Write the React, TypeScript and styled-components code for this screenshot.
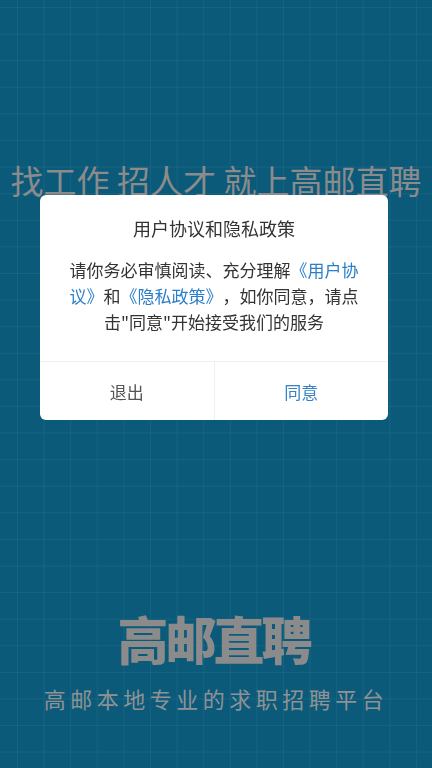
import styled, { createGlobalStyle } from "styled-components";

const GlobalStyle = createGlobalStyle`
  html, body {
    margin: 0;
    padding: 0;
    background: #0b5a7a;
  }
  body {
    font-family: "Noto Sans CJK SC", "Noto Sans", sans-serif;
    text-spacing-trim: space-all;
  }
`;

const Splash = styled.div`
  position: relative;
  width: 432px;
  height: 768px;
  overflow: hidden;
  display: flex;
  flex-direction: column;
  align-items: center;
  background-color: #0b5a7a;
  background-image:
    linear-gradient(to right, rgba(255, 255, 255, 0.05) 1px, transparent 1px),
    linear-gradient(to bottom, rgba(255, 255, 255, 0.05) 1px, transparent 1px);
  background-size: 26.6px 26.6px;
  background-position: 17px 7px;
`;

const Slogan = styled.h2`
  margin: 160px 0 0;
  font-size: 33px;
  line-height: 40px;
  font-weight: 400;
  color: #8b8b8b;
  white-space: nowrap;
`;

const Brand = styled.h1`
  margin: 408px 0 0;
  font-size: 51px;
  line-height: 60px;
  font-weight: 900;
  letter-spacing: -3px;
  padding-right: 5px;
  color: #8b8b8b;
`;

const Tagline = styled.p`
  margin: 15px 0 0;
  font-size: 22px;
  line-height: 30px;
  letter-spacing: 4.5px;
  color: #8e9294;
`;

const Overlay = styled.div`
  position: fixed;
  inset: 0;
  display: flex;
  justify-content: flex-start;
  align-items: flex-start;
  padding: 195px 0 0 40px;
`;

const Dialog = styled.div`
  width: 348px;
  background: #ffffff;
  border-radius: 6px;
  overflow: hidden;
  display: flex;
  flex-direction: column;
`;

const Title = styled.div`
  padding: 20px 0 0;
  text-align: center;
  font-size: 18px;
  line-height: 26px;
  color: #333333;
`;

const Message = styled.div`
  padding: 16px 24px 26px;
  text-align: center;
  font-size: 17px;
  line-height: 26px;
  color: #333333;
`;

const Link = styled.span`
  color: #2b7ecb;
`;

const Actions = styled.div`
  display: flex;
  border-top: 1px solid #f0f0f0;
`;

const ActionButton = styled.button<{ $primary?: boolean }>`
  flex: 1;
  height: 58px;
  border: none;
  background: transparent;
  font-family: inherit;
  font-size: 17px;
  color: ${(p) => (p.$primary ? "#3582c6" : "#555555")};
  & + & {
    border-left: 1px solid #f0f0f0;
  }
`;

export default function App() {
  return (
    <>
      <GlobalStyle />
      <Splash>
        <Slogan>找工作 招人才 就上高邮直聘</Slogan>
        <Brand>高邮直聘</Brand>
        <Tagline>高邮本地专业的求职招聘平台</Tagline>
      </Splash>
      <Overlay>
        <Dialog>
          <Title>用户协议和隐私政策</Title>
          <Message>
            请你务必审慎阅读、充分理解<Link>《用户协议》</Link>和
            <Link>《隐私政策》</Link>，如你同意，请点击"同意"开始接受我们的服务
          </Message>
          <Actions>
            <ActionButton>退出</ActionButton>
            <ActionButton $primary>同意</ActionButton>
          </Actions>
        </Dialog>
      </Overlay>
    </>
  );
}
